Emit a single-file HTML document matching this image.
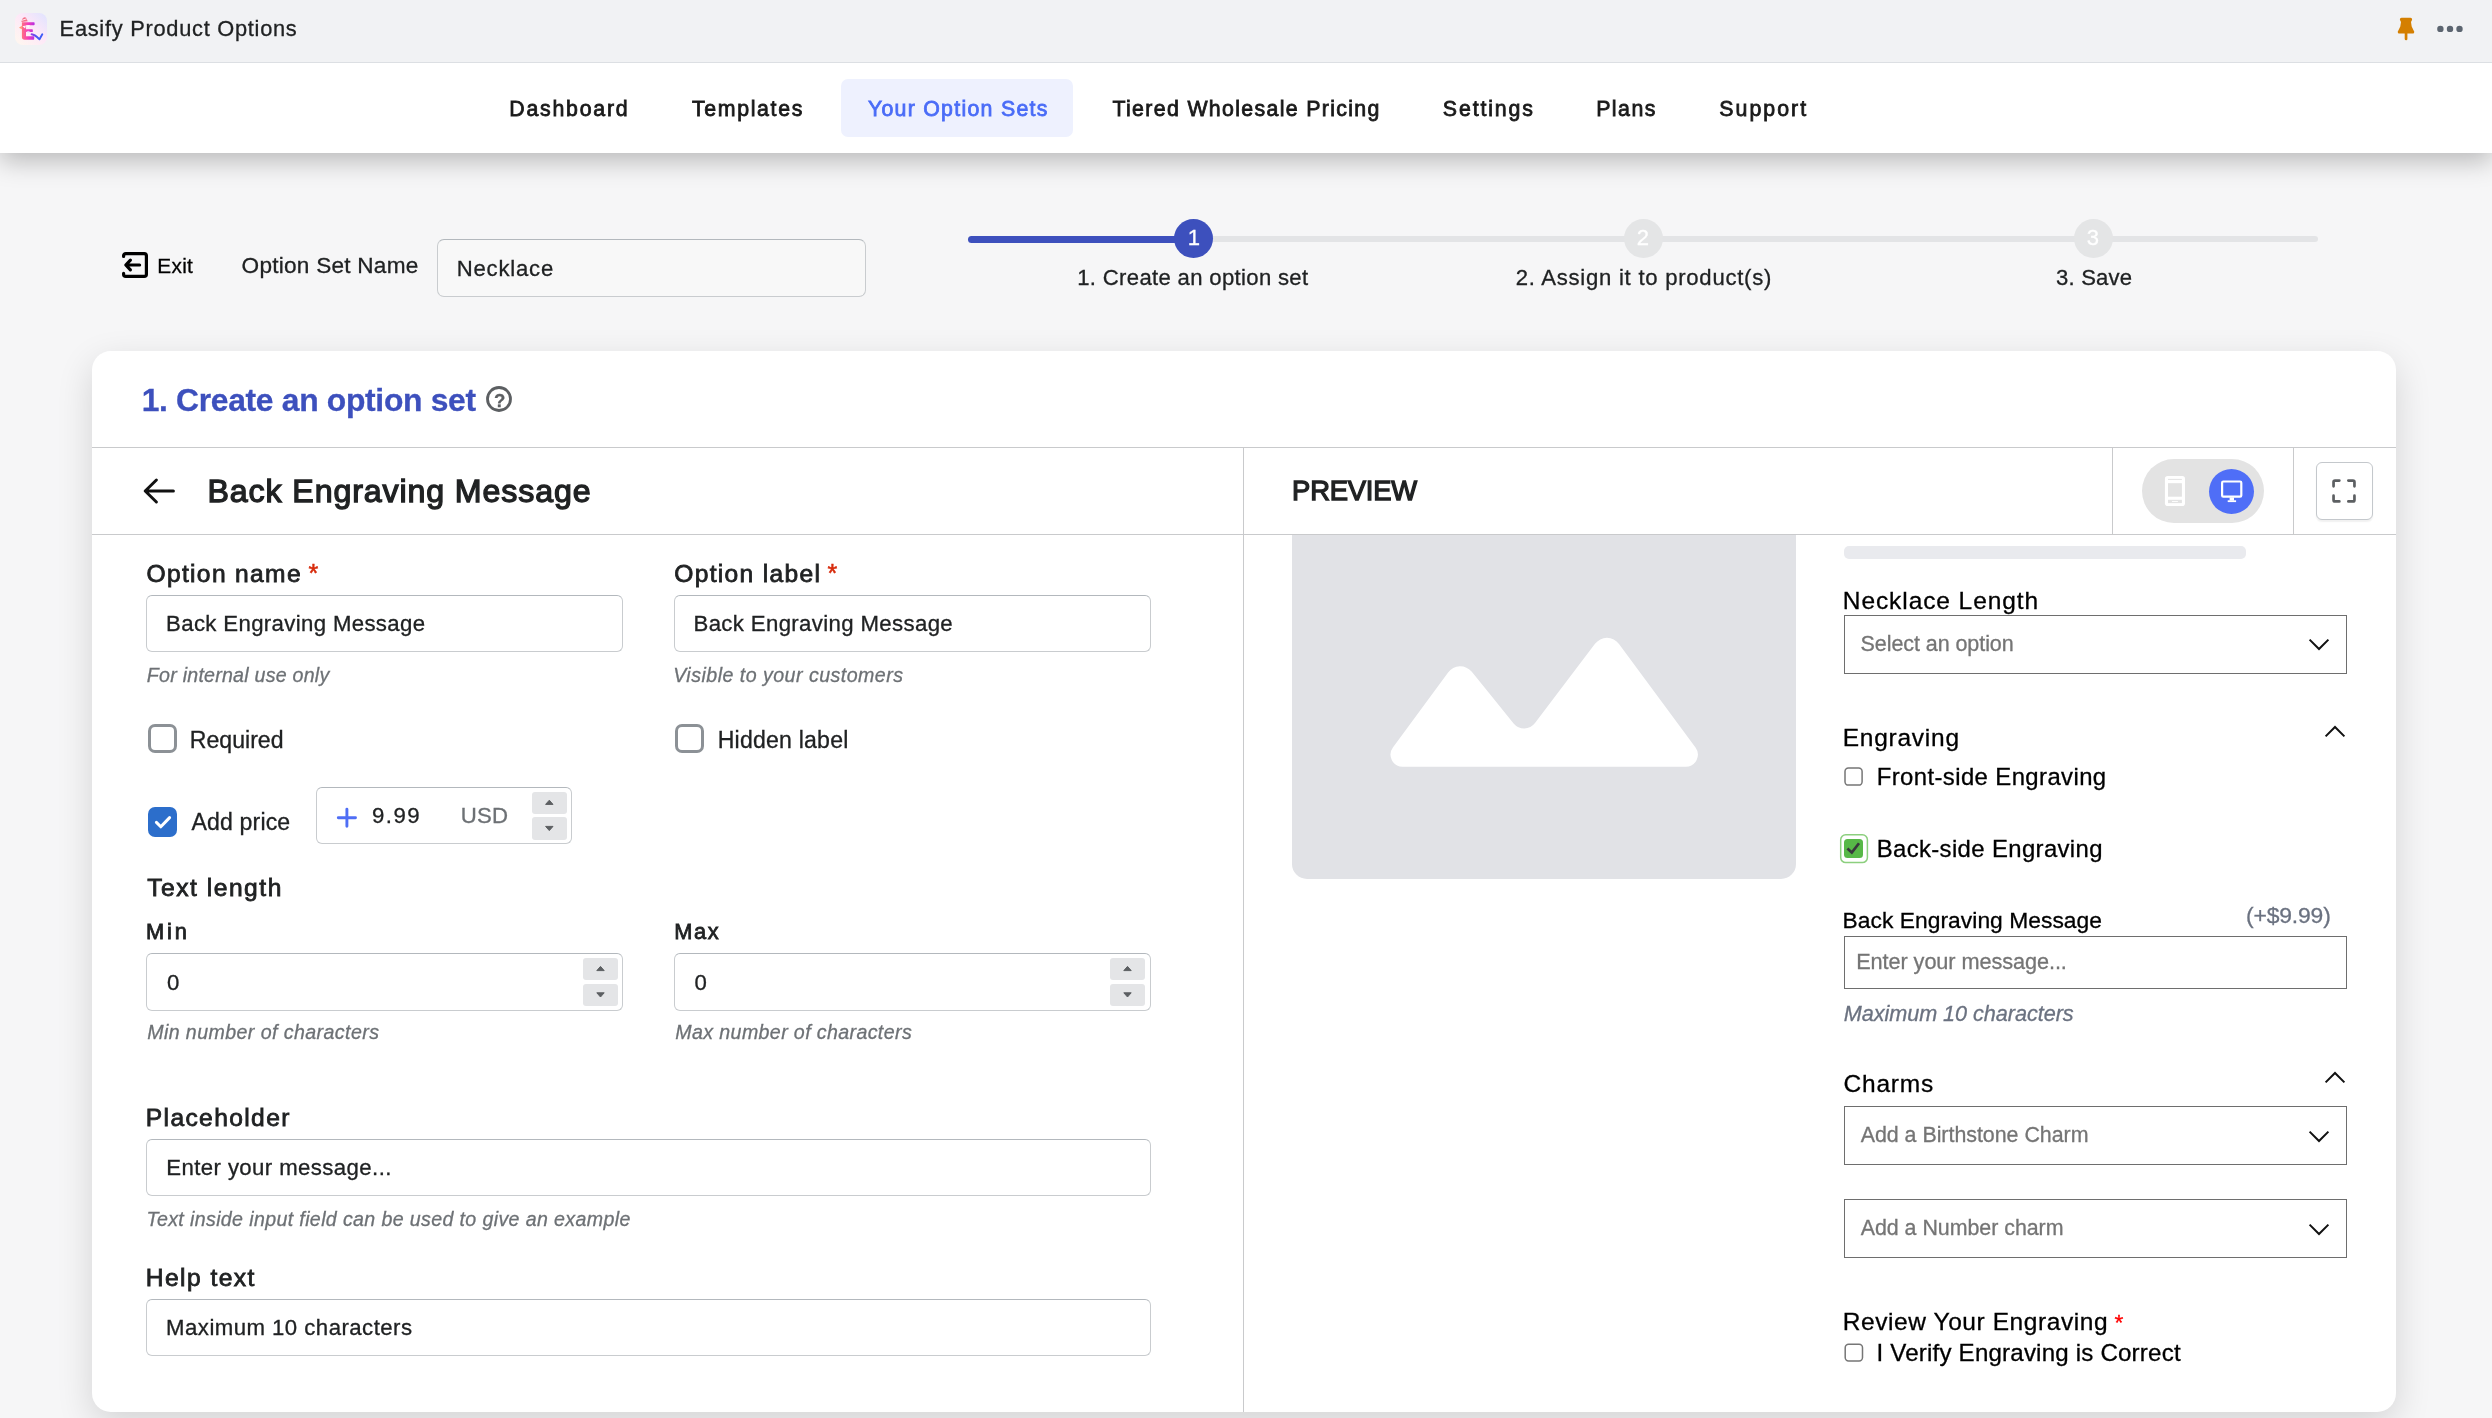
<!DOCTYPE html>
<html lang="en">
<head>
<meta charset="utf-8">
<title>Easify Product Options</title>
<style>
*{box-sizing:border-box;margin:0;padding:0}
html,body{width:100%;height:100%;overflow:hidden}
body{background:#f6f6f7;font-family:"Liberation Sans",Arial,sans-serif;color:#202223;position:relative}
#app{position:absolute;left:0;top:0;width:2492px;height:1418px;will-change:transform;transform-origin:0 0}
@media (max-width:1400px){#app{transform:scale(.5)}}
.t{position:absolute;white-space:nowrap;line-height:1;font-weight:400;font-style:normal;text-decoration:none;margin:0;color:#202223;-webkit-text-stroke:.3px currentColor}
.b{position:absolute;display:block}
svg{position:absolute;overflow:visible}
.inp{position:absolute;background:#fff;border:1px solid #c9cccf;border-top-color:#b3b8bd;border-radius:6px}
.sel{position:absolute;background:#fff;border:1px solid #6e6e6e}
.spin{position:absolute;background:#e4e5e7;border-radius:3px}
.cb{position:absolute;width:29px;height:29px;border:3px solid #8c9196;border-radius:7px;background:#fff}
.pcb{position:absolute;width:18.5px;height:18.5px;border:1.5px solid #767676;border-radius:3.5px;background:#fff}
.ln{position:absolute;background:#c9cacc}
</style>
</head>
<body>
<div id="app">

<!-- NAV BAR -->
<nav class="b" style="left:0;top:63px;width:2492px;height:90px;background:#fff;box-shadow:0 8px 24px rgba(0,0,0,.25)">
</nav>
<span class="b" style="left:841px;top:79px;width:232px;height:57.5px;border-radius:7px;background:#eef1fe"></span>
<a class="t" id="t1" style="left:509.35px;top:99.00px;font-size:21.3px;color:#1a1a1a;letter-spacing:1.758px;-webkit-text-stroke:.8px currentColor;">Dashboard</a>
<a class="t" id="t2" style="left:691.93px;top:99.00px;font-size:21.3px;color:#1a1a1a;letter-spacing:1.673px;-webkit-text-stroke:.8px currentColor;">Templates</a>
<a class="t" id="t3" style="left:867.88px;top:99.00px;font-size:21.3px;color:#4a6cf7;letter-spacing:1.285px;-webkit-text-stroke:.8px currentColor;">Your Option Sets</a>
<a class="t" id="t4" style="left:1112.48px;top:99.00px;font-size:21.3px;color:#1a1a1a;letter-spacing:1.346px;-webkit-text-stroke:.8px currentColor;">Tiered Wholesale Pricing</a>
<a class="t" id="t5" style="left:1442.87px;top:99.00px;font-size:21.3px;color:#1a1a1a;letter-spacing:1.862px;-webkit-text-stroke:.8px currentColor;">Settings</a>
<a class="t" id="t6" style="left:1596.18px;top:99.00px;font-size:21.3px;color:#1a1a1a;letter-spacing:1.480px;-webkit-text-stroke:.8px currentColor;">Plans</a>
<a class="t" id="t7" style="left:1719.35px;top:99.00px;font-size:21.3px;color:#1a1a1a;letter-spacing:2.034px;-webkit-text-stroke:.8px currentColor;">Support</a>

<!-- APP TITLE BAR -->
<header class="b" style="left:0;top:0;width:2492px;height:63px;background:#f1f2f4;border-bottom:1px solid #dcdfe3"></header>
<svg style="left:15px;top:13px" width="32" height="32" viewBox="0 0 32 32">
  <defs>
    <linearGradient id="lgbg" x1="1" y1="0" x2="0" y2="1"><stop offset="0" stop-color="#dfe3ff"/><stop offset=".45" stop-color="#fde8f8"/><stop offset="1" stop-color="#fff8ee"/></linearGradient>
    <linearGradient id="lge" x1="0" y1="0" x2="1" y2="0"><stop offset="0" stop-color="#ff7280"/><stop offset=".5" stop-color="#f43cba"/><stop offset="1" stop-color="#b42ee2"/></linearGradient>
    <linearGradient id="lgc" x1="0" y1="0" x2="1" y2="0"><stop offset="0" stop-color="#8a3ee8"/><stop offset=".6" stop-color="#3f5cf6"/></linearGradient>
  </defs>
  <rect width="32" height="32" rx="8" fill="url(#lgbg)"/>
  <path d="M6.9 9.2H18.9a.7.7 0 0 1 .7.7v1.6a.7.7 0 0 1-.7.7H11v4h6.2a.6.6 0 0 1 .6.6v1.7a.6.6 0 0 1-.6.6H11v4.2h7.6a.6.6 0 0 1 .6.6v2.2a.6.6 0 0 1-.6.6H9.6A2.7 2.7 0 0 1 6.9 24z" fill="url(#lge)"/>
  <path d="M6.4 8.9c.2-2.6 1.4-4.6 3.2-4.7 1.6 0 2.4 1.2 2.6 3l.6 1z" fill="#f4728c"/>
  <path d="M6.6 7.4l5.2-1.6" stroke="#fff" stroke-width=".9" fill="none" opacity=".9"/>
  <path d="M4 14.8l2.9-2v3.4z" fill="#ff9a70"/>
  <path d="M7.4 13.2l3.6-.8-.9 3.1zM11.2 12.6l3.7-.6-1.5 3.1z" fill="#fff" opacity=".92"/>
  <path d="M11.4 18.6l2.2-.9 1.7 1.4-1.9.9z" fill="#e9d4ff" opacity=".8"/>
  <path d="M16.6 21.3c3.4.4 5.4 2.6 7.9 5l2.8-5" fill="none" stroke="url(#lgc)" stroke-width="1.9" stroke-linecap="round" stroke-linejoin="round"/>
</svg>
<div class="t" id="t0" style="left:59.61px;top:18.00px;font-size:21.8px;letter-spacing:0.735px;">Easify Product Options</div>
<svg style="left:2396px;top:16px" width="20" height="26" viewBox="0 0 20 26">
  <path d="M5.6 1.7h8.8a1.7 1.7 0 0 1 1.5 2.5l-.9 1.8 .7 4.4 2.2 4.6a1.6 1.6 0 0 1-1.4 2.6H11.4v5.4a1.35 1.35 0 0 1-2.7 0v-5.4H3.5a1.6 1.6 0 0 1-1.4-2.6l2.2-4.6 .7-4.4-.9-1.8a1.7 1.7 0 0 1 1.5-2.5z" fill="#d47f00"/>
</svg>
<svg style="left:2434px;top:24px" width="32" height="10" viewBox="0 0 32 10"><circle cx="6.4" cy="4.9" r="3.2" fill="#5c6570"/><circle cx="16" cy="4.9" r="3.2" fill="#5c6570"/><circle cx="25.5" cy="4.9" r="3.2" fill="#5c6570"/></svg>

<main>
<!-- EXIT / NAME ROW -->
<svg style="left:122px;top:252px" width="26" height="26" viewBox="0 0 26 26" fill="none" stroke="#000" stroke-width="3.2" stroke-linecap="round" stroke-linejoin="round">
  <path d="M1.6 4.4V3.8a2.2 2.2 0 0 1 2.2-2.2h18.4a2.2 2.2 0 0 1 2.2 2.2v18.4a2.2 2.2 0 0 1-2.2 2.2H3.8a2.2 2.2 0 0 1-2.2-2.2v-.8"/>
  <path d="M17.6 13H4.2M8.4 8.2L3.8 13l4.6 4.8"/>
</svg>
<div class="inp" style="left:437px;top:239px;width:429px;height:58px;background:#f8f8f8;border-radius:7px"></div>
<div class="t" id="t8" style="left:157.37px;top:256.01px;font-size:20.8px;color:#000;letter-spacing:0.250px;">Exit</div>
<div class="t" id="t9" style="left:241.61px;top:255.00px;font-size:22.6px;letter-spacing:0.239px;">Option Set Name</div>
<div class="t" id="t10" style="left:456.68px;top:258.01px;font-size:22.1px;letter-spacing:0.805px;">Necklace</div>

<!-- STEPPER -->
<div class="b" style="left:968px;top:236px;width:1350px;height:6px;border-radius:3px;background:#e3e4e6"></div>
<div class="b" style="left:968px;top:235.5px;width:230px;height:7px;border-radius:3.5px;background:#3d50bd"></div>
<div class="b" style="left:1173.7px;top:219px;width:39px;height:39px;border-radius:50%;background:#3d50bd"></div>
<div class="b" style="left:1624.2px;top:219px;width:39px;height:39px;border-radius:50%;background:#e4e5e6"></div>
<div class="b" style="left:2074px;top:219px;width:39px;height:39px;border-radius:50%;background:#e4e5e6"></div>
<div class="t" id="t11" style="left:1077.22px;top:267.02px;font-size:22.1px;letter-spacing:0.335px;">1. Create an option set</div>
<div class="t" id="t12" style="left:1515.68px;top:267.02px;font-size:22.1px;letter-spacing:0.748px;">2. Assign it to product(s)</div>
<div class="t" id="t13" style="left:2056.10px;top:267.02px;font-size:22.1px;letter-spacing:0.181px;">3. Save</div>
<div class="t" id="t14" style="left:1187.74px;top:227.02px;font-size:22.1px;color:#ffffff;">1</div>
<div class="t" id="t15" style="left:1636.68px;top:227.02px;font-size:22.1px;color:#ffffff;">2</div>
<div class="t" id="t16" style="left:2086.70px;top:227.02px;font-size:22.1px;color:#ffffff;">3</div>

<!-- CARD -->
<section class="b" style="left:92px;top:351px;width:2303.5px;height:1061px;border-radius:19px;background:#fff;box-shadow:0 12px 36px rgba(0,0,0,.14)"></section>
<div class="ln" style="left:92px;top:447px;width:2303.5px;height:1px"></div>
<div class="ln" style="left:92px;top:534px;width:2303.5px;height:1px"></div>
<div class="ln" style="left:1243px;top:447px;width:1px;height:965px"></div>
<div class="ln" style="left:2112px;top:447px;width:1px;height:88px"></div>
<div class="ln" style="left:2293px;top:447px;width:1px;height:88px"></div>
<h1 class="t" id="t17" style="left:141.64px;top:385.00px;font-size:31.8px;font-weight:700;color:#3d50bd;letter-spacing:-0.301px;">1. Create an option set</h1>
<div class="t" id="t18" style="left:493.89px;top:392.00px;font-size:18.6px;font-weight:700;color:#5c5f62;">?</div>
<svg style="left:485px;top:385px" width="28" height="28" viewBox="0 0 28 28"><circle cx="14" cy="14" r="11.5" fill="none" stroke="#5c5f62" stroke-width="2.8"/></svg>

<!-- LEFT HEADER -->
<svg style="left:140px;top:475px" width="40" height="32" viewBox="0 0 40 32" fill="none" stroke="#111" stroke-width="3" stroke-linecap="round" stroke-linejoin="round"><path d="M33.4 16H5.6M16.4 5L5.2 16l11.2 11"/></svg>
<h2 class="t" id="t19" style="left:207.52px;top:475.01px;font-size:32.2px;letter-spacing:0.865px;-webkit-text-stroke:1.3px currentColor;">Back Engraving Message</h2>
<h2 class="t" id="t20" style="left:1292.10px;top:477.00px;font-size:27.4px;letter-spacing:-0.223px;-webkit-text-stroke:1.3px currentColor;">PREVIEW</h2>

<!-- DEVICE TOGGLE -->
<div class="b" style="left:2142px;top:459px;width:122px;height:64px;border-radius:32px;background:#e3e3e3"></div>
<div class="b" style="left:2209px;top:469px;width:45.3px;height:45.3px;border-radius:50%;background:#4f6ef7"></div>
<svg style="left:2163px;top:474px" width="24" height="34" viewBox="0 0 24 34">
  <rect x="1.9" y="2" width="20.1" height="30.1" rx="2.8" fill="#fff"/>
  <rect x="5" y="4.9" width="13.9" height="1" fill="#e3e3e3"/>
  <rect x="5" y="9.2" width="13.9" height="13.5" fill="#e3e3e3"/>
  <rect x="5" y="25.8" width="13.9" height="3.3" fill="#e3e3e3"/>
  <rect x="9" y="27" width="5.9" height=".9" fill="#fff"/>
</svg>
<svg style="left:2219px;top:478px" width="26" height="26" viewBox="0 0 26 26" fill="none" stroke="#fff">
  <rect x="3.1" y="3.5" width="19.2" height="15.2" rx="1.2" stroke-width="2.2"/>
  <path d="M12.8 19.4v3.2" stroke-width="4.4"/>
  <path d="M8.7 23.2h8.4" stroke-width="1.8"/>
</svg>
<div class="b" style="left:2316px;top:462px;width:57px;height:57.5px;border-radius:6px;background:#fff;border:1px solid #c4c8cc;box-shadow:0 1.5px 1.5px rgba(0,0,0,.06)"></div>
<svg style="left:2330px;top:477px" width="28" height="28" viewBox="0 0 28 28" fill="none" stroke="#5c5f62" stroke-width="2.7" stroke-linecap="round" stroke-linejoin="round"><path d="M3.55 9.35V5.05a1.5 1.5 0 0 1 1.5-1.5H9.35M18.35 3.55h4.6a1.5 1.5 0 0 1 1.5 1.5v4.3M24.45 18.65v4.3a1.5 1.5 0 0 1-1.5 1.5h-4.6M9.35 24.45H5.05a1.5 1.5 0 0 1-1.5-1.5v-4.3"/></svg>

<!-- FORM -->
<div class="inp" style="left:146px;top:595px;width:477px;height:56.5px"></div>
<div class="inp" style="left:674px;top:595px;width:476.5px;height:56.5px"></div>
<span class="cb" style="left:148px;top:724px"></span>
<span class="cb" style="left:675px;top:724px"></span>
<span class="b" style="left:148px;top:807px;width:29px;height:29.8px;border-radius:7px;background:#2c6ecb"></span>
<svg style="left:148px;top:807px" width="30" height="30" viewBox="0 0 30 30" fill="none" stroke="#fff" stroke-width="3" stroke-linecap="round" stroke-linejoin="round"><path d="M8.4 15.4l4.4 4.4 8.8-9.2"/></svg>
<div class="inp" style="left:316px;top:787px;width:256px;height:56.5px"></div>
<svg style="left:334px;top:805px" width="26" height="26" viewBox="0 0 26 26" fill="none" stroke="#4f6ef5" stroke-width="2.9" stroke-linecap="round"><path d="M4.3 12.7h17.2M12.9 4.1v17.2"/></svg>
<span class="spin" style="left:532.3px;top:792px;width:34.5px;height:22.3px"></span>
<span class="spin" style="left:532.3px;top:817px;width:34.5px;height:23px"></span>
<svg style="left:532.3px;top:792px" width="34.5" height="48" viewBox="0 0 34.5 48" fill="#5c5f62"><path d="M13.6 12.4l3.7-4.2 3.7 4.2zM13.6 34.4l3.7 4.2 3.7-4.2z" stroke="#5c5f62" stroke-width="1" stroke-linejoin="round"/></svg>

<div class="inp" style="left:146px;top:953px;width:477px;height:57.5px"></div>
<span class="spin" style="left:583px;top:958px;width:35px;height:21.5px"></span>
<span class="spin" style="left:583px;top:984px;width:35px;height:21.5px"></span>
<svg style="left:583px;top:958px" width="35" height="48" viewBox="0 0 35 48" fill="#5c5f62"><path d="M13.8 12.6l3.7-4.2 3.7 4.2zM13.8 34.8l3.7 4.2 3.7-4.2z" stroke="#5c5f62" stroke-width="1" stroke-linejoin="round"/></svg>
<div class="inp" style="left:674px;top:953px;width:476.5px;height:57.5px"></div>
<span class="spin" style="left:1110px;top:958px;width:35px;height:21.5px"></span>
<span class="spin" style="left:1110px;top:984px;width:35px;height:21.5px"></span>
<svg style="left:1110px;top:958px" width="35" height="48" viewBox="0 0 35 48" fill="#5c5f62"><path d="M13.8 12.6l3.7-4.2 3.7 4.2zM13.8 34.8l3.7 4.2 3.7-4.2z" stroke="#5c5f62" stroke-width="1" stroke-linejoin="round"/></svg>
<div class="inp" style="left:146px;top:1139px;width:1004.5px;height:56.5px"></div>
<div class="inp" style="left:146px;top:1299px;width:1004.5px;height:56.5px"></div>
<label class="t" id="t21" style="left:146.42px;top:562.00px;font-size:24.6px;letter-spacing:1.339px;-webkit-text-stroke:.8px currentColor;">Option name</label>
<div class="t" id="t22" style="left:308.41px;top:561.01px;font-size:25.1px;color:#d72c0d;-webkit-text-stroke:.5px currentColor;">*</div>
<label class="t" id="t23" style="left:674.23px;top:562.00px;font-size:24.6px;letter-spacing:1.311px;-webkit-text-stroke:.8px currentColor;">Option label</label>
<div class="t" id="t24" style="left:827.38px;top:561.01px;font-size:25.1px;color:#d72c0d;-webkit-text-stroke:.5px currentColor;">*</div>
<div class="t" id="t25" style="left:166.10px;top:613.01px;font-size:22.2px;letter-spacing:0.349px;">Back Engraving Message</div>
<div class="t" id="t26" style="left:693.51px;top:613.01px;font-size:22.2px;letter-spacing:0.361px;">Back Engraving Message</div>
<div class="t" id="t27" style="left:146.87px;top:666.01px;font-size:19.6px;font-style:italic;color:#6d7175;letter-spacing:0.240px;">For internal use only</div>
<div class="t" id="t28" style="left:673.20px;top:666.01px;font-size:19.6px;font-style:italic;color:#6d7175;letter-spacing:0.471px;">Visible to your customers</div>
<div class="t" id="t29" style="left:189.75px;top:729.00px;font-size:23.1px;letter-spacing:0.009px;">Required</div>
<div class="t" id="t30" style="left:717.67px;top:729.00px;font-size:23.1px;letter-spacing:0.206px;">Hidden label</div>
<div class="t" id="t31" style="left:191.52px;top:811.01px;font-size:23.1px;letter-spacing:0.141px;">Add price</div>
<div class="t" id="t32" style="left:371.94px;top:805.01px;font-size:22.2px;letter-spacing:1.503px;">9.99</div>
<div class="t" id="t33" style="left:460.79px;top:805.01px;font-size:22.2px;color:#6d7175;letter-spacing:0.173px;">USD</div>
<label class="t" id="t34" style="left:147.18px;top:876.00px;font-size:24.6px;letter-spacing:1.522px;-webkit-text-stroke:.8px currentColor;">Text length</label>
<label class="t" id="t35" style="left:145.96px;top:921.01px;font-size:21.8px;letter-spacing:2.883px;-webkit-text-stroke:.8px currentColor;">Min</label>
<label class="t" id="t36" style="left:674.25px;top:921.01px;font-size:21.8px;letter-spacing:1.552px;-webkit-text-stroke:.8px currentColor;">Max</label>
<div class="t" id="t37" style="left:167.11px;top:972.01px;font-size:22.2px;">0</div>
<div class="t" id="t38" style="left:694.38px;top:972.01px;font-size:22.2px;">0</div>
<div class="t" id="t39" style="left:147.15px;top:1023.00px;font-size:19.6px;font-style:italic;color:#6d7175;letter-spacing:0.423px;">Min number of characters</div>
<div class="t" id="t40" style="left:675.36px;top:1023.00px;font-size:19.6px;font-style:italic;color:#6d7175;letter-spacing:0.379px;">Max number of characters</div>
<label class="t" id="t41" style="left:145.77px;top:1106.01px;font-size:24.6px;letter-spacing:1.373px;-webkit-text-stroke:.8px currentColor;">Placeholder</label>
<div class="t" id="t42" style="left:166.26px;top:1157.00px;font-size:22.2px;letter-spacing:0.405px;">Enter your message...</div>
<div class="t" id="t43" style="left:146.40px;top:1210.01px;font-size:19.6px;font-style:italic;color:#6d7175;letter-spacing:0.368px;">Text inside input field can be used to give an example</div>
<label class="t" id="t44" style="left:145.77px;top:1266.01px;font-size:24.6px;letter-spacing:1.452px;-webkit-text-stroke:.8px currentColor;">Help text</label>
<div class="t" id="t45" style="left:166.10px;top:1317.00px;font-size:22.2px;letter-spacing:0.458px;">Maximum 10 characters</div>

<!-- PREVIEW -->
<div class="b" style="left:1292px;top:535px;width:504px;height:344px;background:#e1e2e6;border-radius:0 0 15px 15px"></div>
<svg style="left:1292px;top:535px" width="504" height="344" viewBox="0 0 504 344"><path d="M110.6 231.7A12 12 0 0 1 100.9 212.6L156.1 137.4A15 15 0 0 1 179.8 136.8L221.6 188.4A13.6 13.6 0 0 0 243.0 188.0L303.0 108.8A15 15 0 0 1 327.0 108.9L403.5 212.6A12 12 0 0 1 393.8 231.7Z" fill="#fff"/></svg>
<div class="b" style="left:1844px;top:545.5px;width:402px;height:13.5px;border-radius:5px;background:#e9eaee"></div>
<div class="sel" style="left:1844px;top:615px;width:503px;height:59px"></div>
<svg style="left:2305px;top:634px" width="28" height="20" viewBox="0 0 28 20" fill="none" stroke="#111" stroke-width="2"><path d="M4.6 5.6l9.4 9.4 9.4-9.4"/></svg>
<svg style="left:2321px;top:721px" width="28" height="20" viewBox="0 0 28 20" fill="none" stroke="#111" stroke-width="2"><path d="M4.6 15.4L14 6l9.4 9.4"/></svg>
<svg style="left:1843px;top:766px" width="22" height="22" viewBox="0 0 22 22"><rect x="2" y="2" width="17.1" height="17.1" rx="3.4" fill="#fff" stroke="#767676" stroke-width="1.5"/></svg>
<svg style="left:1838px;top:832px" width="32" height="33" viewBox="0 0 32 33"><rect x="2.7" y="2.7" width="26.7" height="27.9" rx="5" fill="#fff" stroke="#8ccf7e" stroke-width="1.5"/></svg>
<span class="b" style="left:1844.2px;top:839.2px;width:18.8px;height:18.6px;border-radius:3.5px;background:#57b847"></span>
<svg style="left:1844px;top:839px" width="19" height="19" viewBox="0 0 19 19" fill="none" stroke="#38383c" stroke-width="2.7"><path d="M3.4 9.6l4.4 4 7.2-9.4"/></svg>
<div class="sel" style="left:1844px;top:936px;width:503px;height:53px"></div>
<svg style="left:2321px;top:1067px" width="28" height="20" viewBox="0 0 28 20" fill="none" stroke="#111" stroke-width="2"><path d="M4.6 15.4L14 6l9.4 9.4"/></svg>
<div class="sel" style="left:1844px;top:1106px;width:503px;height:58.5px"></div>
<svg style="left:2305px;top:1126px" width="28" height="20" viewBox="0 0 28 20" fill="none" stroke="#111" stroke-width="2"><path d="M4.6 5.6l9.4 9.4 9.4-9.4"/></svg>
<div class="sel" style="left:1844px;top:1199px;width:503px;height:59px"></div>
<svg style="left:2305px;top:1219px" width="28" height="20" viewBox="0 0 28 20" fill="none" stroke="#111" stroke-width="2"><path d="M4.6 5.6l9.4 9.4 9.4-9.4"/></svg>
<svg style="left:1843px;top:1342px" width="22" height="22" viewBox="0 0 22 22"><rect x="2.2" y="2.3" width="17.3" height="16.6" rx="3.4" fill="#fff" stroke="#767676" stroke-width="1.5"/></svg>
<div class="t" id="t46" style="left:1842.79px;top:589.01px;font-size:24.5px;color:#000;letter-spacing:0.918px;">Necklace Length</div>
<div class="t" id="t47" style="left:1860.60px;top:634.00px;font-size:21.51px;color:#757575;letter-spacing:-0.073px;">Select an option</div>
<div class="t" id="t48" style="left:1842.79px;top:726.00px;font-size:24.5px;color:#000;letter-spacing:0.743px;">Engraving</div>
<div class="t" id="t49" style="left:1876.68px;top:765.00px;font-size:23.9px;color:#000;letter-spacing:0.405px;">Front-side Engraving</div>
<div class="t" id="t50" style="left:1876.68px;top:837.00px;font-size:23.9px;color:#000;letter-spacing:0.372px;">Back-side Engraving</div>
<div class="t" id="t51" style="left:1842.54px;top:909.01px;font-size:22.8px;color:#000;letter-spacing:0.045px;">Back Engraving Message</div>
<div class="t" id="t52" style="left:2245.95px;top:904.00px;font-size:22.88px;color:#6b7280;letter-spacing:-0.138px;">(+$9.99)</div>
<div class="t" id="t53" style="left:1856.21px;top:951.01px;font-size:21.7px;color:#757575;letter-spacing:-0.075px;">Enter your message...</div>
<div class="t" id="t54" style="left:1843.68px;top:1003.01px;font-size:21.66px;font-style:italic;color:#6b7280;letter-spacing:-0.056px;">Maximum 10 characters</div>
<div class="t" id="t55" style="left:1843.45px;top:1072.01px;font-size:24.5px;color:#000;letter-spacing:0.813px;">Charms</div>
<div class="t" id="t56" style="left:1860.71px;top:1125.00px;font-size:21.4px;color:#757575;letter-spacing:-0.024px;">Add a Birthstone Charm</div>
<div class="t" id="t57" style="left:1860.72px;top:1218.00px;font-size:21.4px;color:#757575;letter-spacing:-0.028px;">Add a Number charm</div>
<div class="t" id="t58" style="left:1842.79px;top:1310.00px;font-size:24.5px;color:#000;letter-spacing:0.575px;">Review Your Engraving</div>
<div class="t" id="t59" style="left:2114.59px;top:1311.01px;font-size:22.8px;color:#ff0000;">*</div>
<div class="t" id="t60" style="left:1876.54px;top:1341.01px;font-size:24.1px;color:#000;letter-spacing:0.194px;">I Verify Engraving is Correct</div>
</main>
</div>
</body>
</html>
